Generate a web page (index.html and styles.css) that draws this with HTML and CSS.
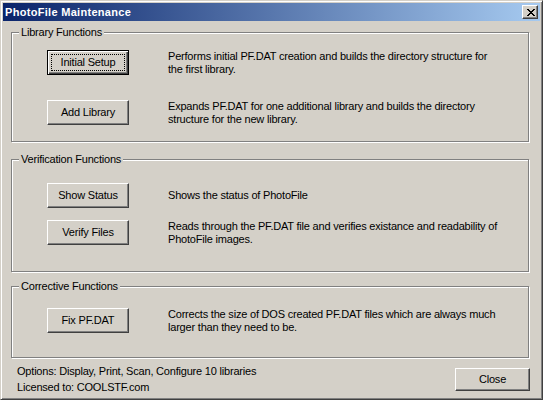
FILE: index.html
```html
<!DOCTYPE html>
<html>
<head>
<meta charset="utf-8">
<link rel="stylesheet" href="styles.css">
</head>
<body>
<div class="window">
  <div class="titlebar">
    <span class="title">PhotoFile Maintenance</span>
    <span class="tclose"><svg width="8" height="7" viewBox="0 0 8 7"><path d="M0 0h2v1h1v1h2V1h1V0h2v1H7v1H6v1H5v1h1v1h1v1h1v1H6V6H5V5H3v1H2v1H0V6h1V5h1V4h1V3H2V2H1V1H0z" fill="#000"/></svg></span>
  </div>
  <div class="client">
    <div class="group g1">
      <div class="legend">Library Functions</div>
      <div class="rows r1">
        <div class="row">
          <div class="btn default"><span class="focus">Initial Setup</span></div>
          <div class="desc">Performs initial PF.DAT creation and builds the directory structure for<br>the first library.</div>
        </div>
        <div class="row">
          <div class="btn">Add Library</div>
          <div class="desc">Expands PF.DAT for one additional library and builds the directory<br>structure for the new library.</div>
        </div>
      </div>
    </div>
    <div class="group g2">
      <div class="legend">Verification Functions</div>
      <div class="rows r2">
        <div class="row">
          <div class="btn">Show Status</div>
          <div class="desc">Shows the status of PhotoFile</div>
        </div>
        <div class="row">
          <div class="btn">Verify Files</div>
          <div class="desc">Reads through the PF.DAT file and verifies existance and readability of<br>PhotoFile images.</div>
        </div>
      </div>
    </div>
    <div class="group g3">
      <div class="legend">Corrective Functions</div>
      <div class="rows r3">
        <div class="row">
          <div class="btn">Fix PF.DAT</div>
          <div class="desc">Corrects the size of DOS created PF.DAT files which are always much<br>larger than they need to be.</div>
        </div>
      </div>
    </div>
    <div class="footer">
      <div class="info">
        <div>Options: Display, Print, Scan, Configure 10 libraries</div>
        <div>Licensed to: COOLSTF.com</div>
      </div>
      <div class="btn close">Close</div>
    </div>
  </div>
</div>
</body>
</html>
```
FILE: styles.css
```css
html, body {
  margin: 0;
  padding: 0;
  background: #d4d0c8;
}
body {
  font-family: "Liberation Sans", Arial, sans-serif;
  font-size: 11px;
  letter-spacing: -0.2px;
  color: #000;
}
.window {
  width: 543px;
  height: 400px;
  box-sizing: border-box;
  background: #d4d0c8;
  border: 1px solid;
  border-color: #d4d0c8 #404040 #404040 #d4d0c8;
  box-shadow: inset 1px 1px #ffffff, inset -1px -1px #808080;
  padding: 2px;
  display: flex;
  flex-direction: column;
}
.titlebar {
  height: 18px;
  background: linear-gradient(to right, #0a246a, #a6caf0);
  display: flex;
  align-items: center;
  justify-content: space-between;
  padding: 0 2px 0 2px;
  flex: none;
}
.title {
  color: #fff;
  font-weight: bold;
  font-size: 11px;
  letter-spacing: 0.3px;
}
.tclose {
  width: 16px;
  height: 14px;
  box-sizing: border-box;
  background: #d4d0c8;
  border: 1px solid;
  border-color: #ffffff #404040 #404040 #ffffff;
  box-shadow: inset -1px -1px #808080;
  display: flex;
  align-items: center;
  justify-content: center;
  padding-left: 1px;
  padding-top: 1px;
}
.tclose svg { display: block; }
.client {
  flex: 1;
  display: flex;
  flex-direction: column;
  padding: 0 11px 0 8px;
}
.group {
  border: 1px solid #808080;
  box-shadow: inset 1px 1px #ffffff, 1px 1px #ffffff;
}
.g1 { margin-top: 11px; }
.g2 { margin-top: 17px; }
.g3 { margin-top: 14px; }
.legend {
  width: fit-content;
  height: 13px;
  line-height: 13px;
  margin: -7px 0 0 7px;
  padding: 0 2px;
  background: #d4d0c8;
}
.rows {
  display: flex;
  flex-direction: column;
}
.r1 { padding: 11px 0 16px; gap: 25px; }
.r2 { padding: 17px 0 26px; gap: 12px; }
.r3 { padding: 15px 0 24px; }
.row {
  display: flex;
  align-items: center;
  padding-left: 35px;
  height: 25px;
}
.btn {
  width: 82px;
  height: 25px;
  box-sizing: border-box;
  flex: none;
  border: 1px solid;
  border-color: #ffffff #404040 #404040 #ffffff;
  box-shadow: inset -1px -1px #808080;
  display: flex;
  align-items: center;
  justify-content: center;
  line-height: 13px;
  position: relative;
}
.btn.default {
  border-color: #000;
  box-shadow: inset 1px 1px #ffffff, inset -1px -1px #404040, inset -2px -2px #808080;
}
.focus::after {
  content: "";
  position: absolute;
  left: 3px;
  top: 3px;
  right: 3px;
  bottom: 3px;
  border: 1px dotted #000;
}
.desc {
  margin-left: 39px;
  line-height: 13px;
  white-space: nowrap;
}
.footer {
  display: flex;
  justify-content: space-between;
  align-items: flex-start;
  padding-left: 6px;
}
.info {
  margin-top: 5px;
  line-height: 16px;
}
.close {
  width: 75px;
  height: 23px;
  margin-top: 10px;
  margin-right: -1px;
}
```
